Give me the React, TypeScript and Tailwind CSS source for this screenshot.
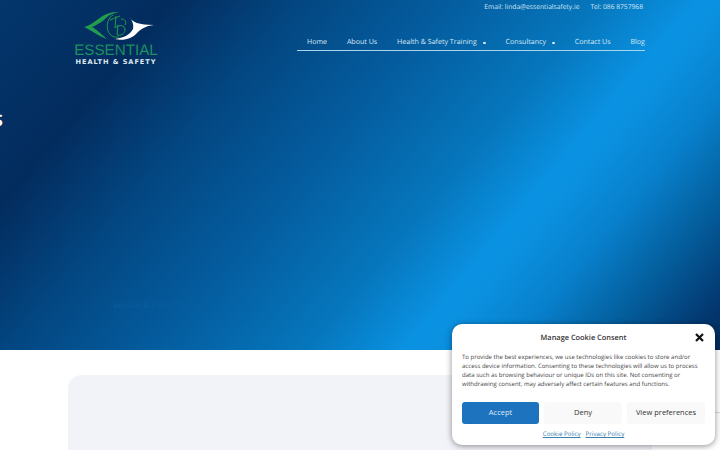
const sans = "font-['Open_Sans','Noto_Sans',sans-serif] [text-rendering:geometricPrecision] antialiased";

function Logo() {
  return (
    <div className="flex w-[84px] flex-col items-center">
      <svg width="72" height="31" viewBox="0 0 72 31" className="mt-[-1px] ml-[5px]">
        <path d="M1 16 C 10 14 17 5 24 3 C 28 1 33 0.5 36 2 C 30 2 26 4 23 7 C 20 10 14 14 9 16 C 13 18 17 22 24 28 C 15 25 8 19 1 16 Z" fill="#229c4e" />
        <path d="M30 4 C 25 7 23 14 25 20 C 27 25 32 27 36 26" fill="none" stroke="#229c4e" strokeWidth="1" />
        <path d="M27 9 L 37 5 M33 5 L 32 17 C 36 13 42 14 42 19 C 42 23 37 25 34 24 L 35 14 M38 8 C 42 8 44 11 42 14" fill="none" stroke="#229c4e" strokeWidth="1" />
        <path d="M46 6 C 49 11 56 14 71 14 C 62 15 58 18 54 22 C 49 28 40 30 32 28 C 40 27 47 24 50 18 C 51 13 49 9 46 6 Z" fill="#ffffff" />
      </svg>
      <div className="mt-[2px] font-['Liberation_Sans',sans-serif] text-[15.2px] leading-[13px] text-[#1d8f60]">ESSENTIAL</div>
      <div className="mt-[1px] whitespace-nowrap font-['DejaVu_Sans',sans-serif] text-[6.6px] leading-[8px] font-bold tracking-[0.95px] text-[#dfe9f0]">HEALTH &amp; SAFETY</div>
    </div>
  );
}

function NavItem({ label, caret }: { label: string; caret?: boolean }) {
  return (
    <span className="flex items-center whitespace-nowrap">
      {label}
      {caret && <span className="ml-[6px] h-[2px] w-[3px] rounded-full bg-[#d9e9f4]" />}
    </span>
  );
}

export default function App() {
  return (
    <div className={`relative h-[450px] w-[720px] overflow-hidden bg-white ${sans}`}>
      <header className="relative h-[350px] bg-[linear-gradient(130deg,#03366c_0%,#032c5e_17%,#034782_30%,#045c9e_44%,#0676bc_59%,#0a92e2_69%,#0a90df_72%,#0880cc_79%,#04609f_87%,#03376f_96%,#032a5c_100%)] pl-[74px] pr-[75px]">
        <div className="flex justify-end gap-[11px] pt-[1px] text-[6.7px] leading-[11px] text-[#d5e6f2]">
          <span>Email: linda@essentialsafety.ie</span>
          <span className="mr-[2px]">Tel: 086 8757968</span>
        </div>
        <div className="flex items-start justify-between">
          <Logo />
          <nav className="mt-[23px] box-content flex h-[15px] w-[338px] justify-between border-b border-[#a8d4ee] pl-[10px] text-[7.1px] leading-[11px] text-[#d9e9f4]">
            <NavItem label="Home" />
            <NavItem label="About Us" />
            <NavItem label="Health & Safety Training" caret />
            <NavItem label="Consultancy" caret />
            <NavItem label="Contact Us" />
            <NavItem label="Blog" />
          </nav>
        </div>
        <span className="absolute top-[110px] left-[-6px] text-[16px] leading-[20px] font-bold text-white">S</span>
        <span className="absolute top-[299px] left-[113px] text-[8.5px] leading-[14px] text-[#0a5f9e]">Service &amp; Consultancy</span>
      </header>
      <main className="px-[68px] pt-[25px]">
        <div className="h-[120px] w-[584px] rounded-t-[14px] bg-[#f2f3f8]" />
      </main>
      <div className="absolute top-[412px] right-0 h-px w-[8px] bg-[#d8d8d8]" />
      <div className="absolute top-[324px] left-[452px] flex h-[121px] w-[263px] flex-col rounded-[10px] bg-white px-[10px] shadow-[0_1px_6px_rgba(0,0,0,0.45)]">
        <div className="relative pt-[8px] text-center text-[7.4px] leading-[12px] font-semibold text-[#333]">
          Manage Cookie Consent
          <svg width="9" height="9" viewBox="0 0 9 9" className="absolute top-[9px] right-[1px]">
            <path d="M1 1 L8 8 M8 1 L1 8" stroke="#111" strokeWidth="2.2" />
          </svg>
        </div>
        <p className="mt-[9px] text-[6.05px] leading-[9px] whitespace-pre-line text-[#444]">
          {"To provide the best experiences, we use technologies like cookies to store and/or\naccess device information. Consenting to these technologies will allow us to process\ndata such as browsing behaviour or unique IDs on this site. Not consenting or\nwithdrawing consent, may adversely affect certain features and functions."}
        </p>
        <div className="mt-[13px] flex gap-[5px] text-[7.5px] font-medium">
          <button className="h-[22px] w-[77px] rounded-[3px] bg-[#1e73be] text-[#dfeaf5]">Accept</button>
          <button className="h-[22px] w-[78px] rounded-[3px] bg-[#f9f9f9] text-[#333]">Deny</button>
          <button className="h-[22px] w-[78px] rounded-[3px] bg-[#f9f9f9] text-[#333]">View preferences</button>
        </div>
        <div className="mt-[5px] flex justify-center gap-[5px] text-[6.2px] leading-[10px] text-[#3a80ad] underline">
          <span>Cookie Policy</span>
          <span>Privacy Policy</span>
        </div>
      </div>
    </div>
  );
}
